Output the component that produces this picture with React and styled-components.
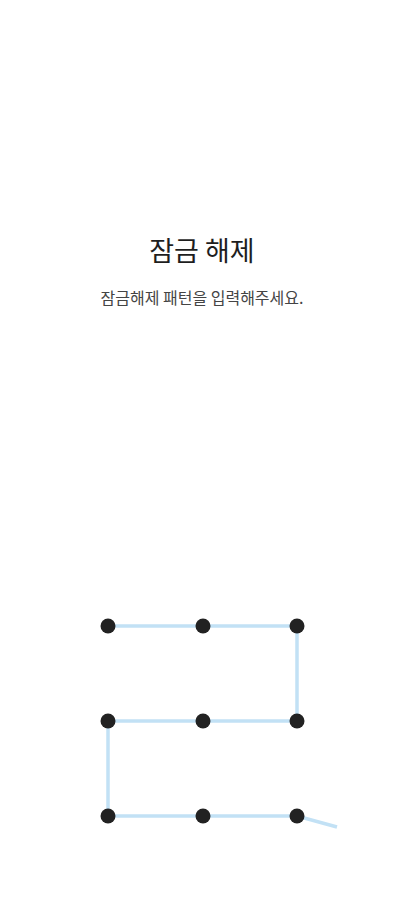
import React from 'react';
import styled, { createGlobalStyle } from 'styled-components';

const Global = createGlobalStyle`
    html, body {
        margin: 0;
        padding: 0;
        background: #fff;
    }
    body {
        font-family: "Noto Sans CJK KR", "Noto Sans", sans-serif;
    }
`;

const Screen = styled.div`
    width: 404px;
    height: 900px;
    display: flex;
    flex-direction: column;
    align-items: center;
    background: #fff;
    overflow: hidden;
`;

const Header = styled.div`
    margin-top: 230px;
    display: flex;
    flex-direction: column;
    align-items: center;
`;

const Title = styled.h1`
    margin: 0;
    font-size: 27px;
    line-height: 40px;
    font-weight: 400;
    color: #1e1e1e;
`;

const Subtitle = styled.p`
    margin: 15px 0 0;
    font-size: 16px;
    line-height: 24px;
    color: #444;
`;

const Pattern = styled.svg`
    display: block;
    margin-top: 292px;
`;

const cols = [108, 203, 297];
const rows = [25, 120, 215];

// pattern drawn so far, ending in the finger's current position
const path = [[108, 25], [297, 25], [297, 120], [108, 120], [108, 215], [297, 215], [337, 226]];

const App = () => {
    return (
        <Screen>
            <Global />
            <Header>
                <Title>잠금 해제</Title>
                <Subtitle>잠금해제 패턴을 입력해주세요.</Subtitle>
            </Header>
            <Pattern width="404" height="240" viewBox="0 0 404 240">
                <polyline
                    points={path.map(p => p.join(',')).join(' ')}
                    fill="none"
                    stroke="#c2e1f5"
                    strokeWidth="3.5"
                />
                {rows.map(y =>
                    cols.map(x => (
                        <circle key={x + '-' + y} cx={x} cy={y} r="7.5" fill="#222" />
                    ))
                )}
            </Pattern>
        </Screen>
    );
};

export default App;
